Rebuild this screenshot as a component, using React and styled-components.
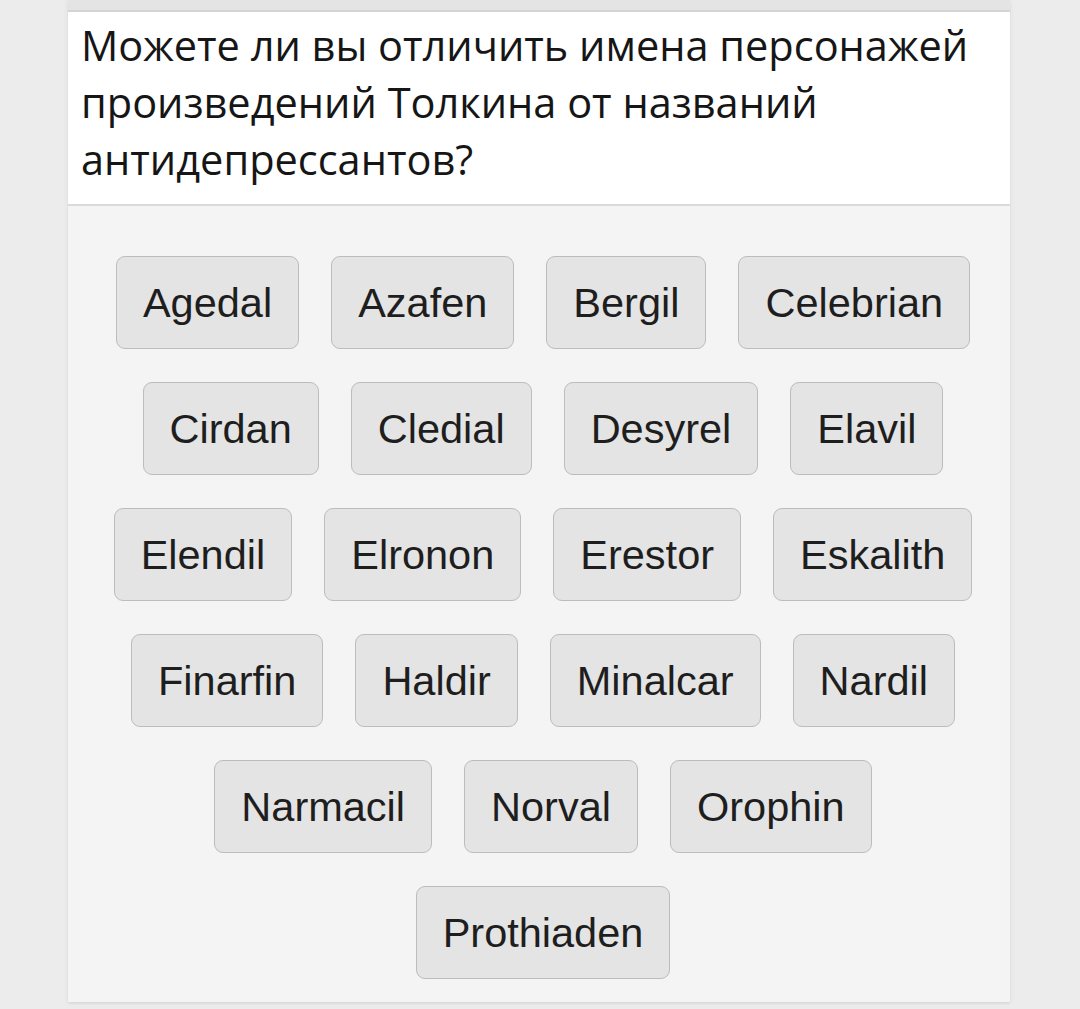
import React from 'react';
import styled, { createGlobalStyle } from 'styled-components';

const names = [
	'Agedal', 'Azafen', 'Bergil', 'Celebrian',
	'Cirdan', 'Cledial', 'Desyrel', 'Elavil',
	'Elendil', 'Elronon', 'Erestor', 'Eskalith',
	'Finarfin', 'Haldir', 'Minalcar', 'Nardil',
	'Narmacil', 'Norval', 'Orophin',
	'Prothiaden',
];

const App = () => {
	return (
		<>
			<GlobalStyle />
			<Page>
				<Panel>
					<TopBar />
					<Question>
						Можете ли вы отличить имена персонажей произведений Толкина от
						названий антидепрессантов?
					</Question>
					<Choices>
						{names.map(name => (
							<Choice key={name}>{name}</Choice>
						))}
					</Choices>
				</Panel>
			</Page>
		</>
	);
};

export default App;

const GlobalStyle = createGlobalStyle`
	html, body {
		margin: 0;
		padding: 0;
		background: #ececec;
	}
	* {
		box-sizing: border-box;
	}
`;

const Page = styled.div`
	width: 1080px;
	height: 1009px;
	overflow: hidden;
	background: #ececec;
`;

const Panel = styled.div`
	margin-left: 68px;
	width: 942px;
	height: 1002px;
	display: flex;
	flex-direction: column;
	background: #f4f4f4;
	box-shadow: 0 0 6px rgba(0, 0, 0, 0.06), 0 2px 2px rgba(0, 0, 0, 0.05);
`;

const TopBar = styled.div`
	height: 12px;
	background: #e4e4e4;
	border-bottom: 2px solid #d4d4d4;
`;

const Question = styled.h1`
	margin: 0;
	padding: 5px 20px 16px 13px;
	background: #fff;
	border-bottom: 2px solid #dadada;
	font-family: 'Open Sans', 'Noto Sans', sans-serif;
	font-size: 41.5px;
	font-weight: 400;
	line-height: 57px;
	color: #161616;
`;

const Choices = styled.div`
	display: flex;
	flex-wrap: wrap;
	justify-content: center;
	align-content: flex-start;
	column-gap: 32px;
	row-gap: 33px;
	padding: 50px 27px 0 35px;
`;

const Choice = styled.button`
	height: 93px;
	padding: 0 26px;
	background: #e4e4e4;
	border: 1.5px solid #bcbcbc;
	border-radius: 9px;
	font-family: 'Liberation Sans', Arial, sans-serif;
	font-size: 41.5px;
	color: #1e1e1e;
	line-height: 1;
	cursor: pointer;
`;
